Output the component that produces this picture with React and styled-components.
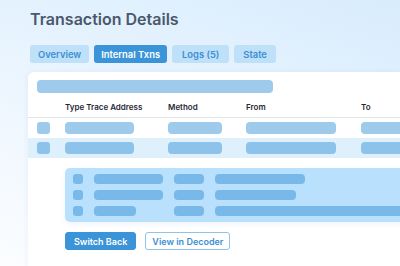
import React from 'react'
import styled, { createGlobalStyle } from 'styled-components';

const GlobalStyle = createGlobalStyle`
    html, body {
        margin: 0;
        padding: 0;
    }
    body {
        font-family: Inter, "Noto Sans", sans-serif;
        -webkit-font-smoothing: antialiased;
    }
`;

const StyledPage = styled.div`
    width: 400px;
    height: 266px;
    overflow: hidden;
    box-sizing: border-box;
    padding: 9px 0 0 28px;
    background: linear-gradient(200deg, #d8ecfd 0%, #e6f3fe 40%, #f4f9ff 75%, #fbfdff 100%);
    display: flex;
    flex-direction: column;
`;

const Title = styled.h1`
    margin: 0 0 0 2px;
    font-size: 16px;
    line-height: 21px;
    font-weight: 600;
    color: #4b586c;
`;

const Tabs = styled.div`
    display: flex;
    gap: 5px;
    margin: 15px 0 0 2px;
`;

const Tab = styled.div`
    height: 18px;
    padding: 0 ${p => p.$pad}px;
    display: flex;
    align-items: center;
    border-radius: 3px;
    font-size: 9.4px;
    font-weight: 600;
    background: ${p => p.$active ? '#3b93d8' : '#bee0f8'};
    color: ${p => p.$active ? '#ffffff' : '#3d8fd3'};
`;

const Card = styled.div`
    margin-top: 9px;
    width: 400px;
    flex: 1;
    background: #ffffff;
    border-radius: 6px 6px 0 0;
    box-shadow: 0 1px 6px rgba(40, 90, 150, 0.08);
    padding: 8px 0 0 9px;
    box-sizing: border-box;
`;

const Skeleton = styled.div`
    width: ${p => p.$w}px;
    height: ${p => p.$h || 12}px;
    border-radius: ${p => p.$r || 4}px;
    background: ${p => p.$color || '#9ecbeb'};
`;

const TableRow = styled.div`
    display: grid;
    grid-template-columns: 28px 103px 78px 115px 1fr;
    align-items: center;
    margin-left: -9px;
    padding: 4px 0 4px 9px;
    background: ${p => p.$highlight ? '#dff0fd' : 'transparent'};
`;

const HeaderRow = styled(TableRow)`
    height: 25px;
    padding-top: 0;
    padding-bottom: 0;
    border-bottom: 1px solid #e1e5ea;
    box-sizing: border-box;
`;

const HeaderCell = styled.div`
    font-size: 8px;
    font-weight: 600;
    color: #1f2937;
    padding-top: 3px;
`;

const Expanded = styled.div`
    margin: 10px 0 0 28px;
    padding: 6px 0 6px 8px;
    background: #b9e0fc;
    border-radius: 5px 0 0 5px;
    box-shadow: 0 2px 6px rgba(60, 120, 190, 0.08);
    display: flex;
    flex-direction: column;
    gap: 6px;
`;

const SubRow = styled.div`
    display: grid;
    grid-template-columns: 21px 80px 41px 1fr;
    align-items: center;
`;

const Actions = styled.div`
    display: flex;
    gap: 9px;
    margin: 10px 0 0 28px;
`;

const ActionButton = styled.button`
    height: 18px;
    box-sizing: border-box;
    padding: 0 ${p => p.$primary ? 8 : 6}px;
    border-radius: 3px;
    font-family: Inter, "Noto Sans", sans-serif;
    font-size: 9px;
    font-weight: 600;
    cursor: pointer;
    border: 1px solid ${p => p.$primary ? '#3b93d8' : '#8fc3ea'};
    background: ${p => p.$primary ? '#3b93d8' : '#ffffff'};
    color: ${p => p.$primary ? '#ffffff' : '#3d8fd3'};
`;

const tabs = [
    { label: "Overview", pad: 8 },
    { label: "Internal Txns", pad: 7 },
    { label: "Logs (5)", pad: 10 },
    { label: "State", pad: 9 },
];
const headers = ["", "Type Trace Address", "Method", "From", "To"];
const rows = [
    { highlight: false, color: '#9ecbeb' },
    { highlight: true, color: '#8dc3ea' },
];
const subRows = [
    [69, 30, 90],
    [69, 30, 81],
    [42, 30, 200],
];

export default function App() {
    return (
        <>
            <GlobalStyle />
            <StyledPage>
                <Title>Transaction Details</Title>
                <Tabs>
                    {tabs.map((tab) =>
                        <Tab key={tab.label} $pad={tab.pad} $active={tab.label === "Internal Txns"}>{tab.label}</Tab>
                    )}
                </Tabs>
                <Card>
                    <Skeleton $w={236} $h={13} />
                    <HeaderRow>
                        {headers.map((h, ind) => <HeaderCell key={ind}>{h}</HeaderCell>)}
                    </HeaderRow>
                    {rows.map((row, ind) => {
                        return (
                            <TableRow key={ind} $highlight={row.highlight}>
                                <Skeleton $w={13} $r={3} $color={row.color} />
                                <Skeleton $w={69} $color={row.color} />
                                <Skeleton $w={54} $color={row.color} />
                                <Skeleton $w={90} $color={row.color} />
                                <Skeleton $w={60} $color={row.color} />
                            </TableRow>
                        )
                    })}
                    <Expanded>
                        {subRows.map((widths, ind) =>
                            <SubRow key={ind}>
                                <Skeleton $w={10} $h={10} $r={3} $color="#79b9ea" />
                                <Skeleton $w={widths[0]} $h={10} $r={4} $color="#79b9ea" />
                                <Skeleton $w={widths[1]} $h={10} $r={4} $color="#79b9ea" />
                                <Skeleton $w={widths[2]} $h={10} $r={4} $color="#79b9ea" />
                            </SubRow>
                        )}
                    </Expanded>
                    <Actions>
                        <ActionButton $primary type="button">Switch Back</ActionButton>
                        <ActionButton type="button">View in Decoder</ActionButton>
                    </Actions>
                </Card>
            </StyledPage>
        </>
    )
}
